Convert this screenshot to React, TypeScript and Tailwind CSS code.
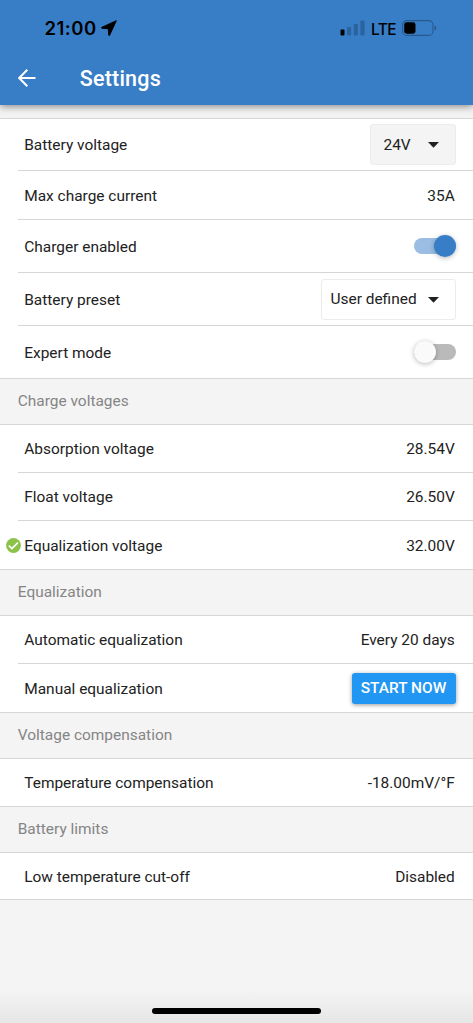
import { useState } from 'react';
import type { FC, ReactNode } from 'react';
import clsx from 'clsx';

interface RowProps {
  label: string;
  height: string;
  last?: boolean;
  checked?: boolean;
  children: ReactNode;
}

const Row: FC<RowProps> = ({ label, height, last, checked, children }) => (
  <div className={clsx('bg-white', !last && 'pl-[18px]', last && 'border-b border-[#d6d6d6]')}>
    <div
      className={clsx(
        'relative flex items-center justify-between pr-[17.5px]',
        height,
        last ? 'pl-[24.25px]' : 'border-b border-[#d6d6d6] pl-[6.25px]',
      )}
    >
      {checked ? (
        <svg className="absolute left-[5.5px] h-[15px] w-[15px]" viewBox="0 0 15 15" aria-hidden="true">
          <circle cx="7.5" cy="7.5" r="7.4" fill="#8bc34a" />
          <path d="M2.9 7.7l3 2.8 6-5.9" fill="none" stroke="#fff" strokeWidth="1.7" />
        </svg>
      ) : null}
      <span className="pt-[3px]">{label}</span>
      {children}
    </div>
  </div>
);

const Value: FC<{ children: ReactNode }> = ({ children }) => <span className="pt-[3px] pr-[0.75px]">{children}</span>;

const SectionTitle: FC<{ title: string; height: string }> = ({ title, height }) => (
  <h2 className={clsx('flex items-center border-b border-[#d6d6d6] pt-px pl-[17.75px] text-[#858585]', height)}>
    {title}
  </h2>
);

const Select: FC<{ value: string; className: string }> = ({ value, className }) => (
  <button
    type="button"
    className={clsx('flex h-[41px] items-center justify-between rounded-[3px] border border-[#ececec]', className)}
  >
    <span className="pt-0.5">{value}</span>
    <svg className="mt-px h-[6px] w-[11px]" viewBox="0 0 11 6" aria-hidden="true">
      <path d="M0 0h11L5.5 5.8z" fill="#212121" />
    </svg>
  </button>
);

const Toggle: FC<{ label: string; initial: boolean }> = ({ label, initial }) => {
  const [on, setOn] = useState(initial);

  return (
    <button
      type="button"
      role="switch"
      aria-checked={on}
      aria-label={label}
      onClick={() => setOn(!on)}
      className={clsx(
        'flex h-[15.5px] w-[42px] items-center rounded-full',
        on ? 'justify-end bg-[#9bbde4]' : 'justify-start bg-[#bababa]',
      )}
    >
      <span
        className={clsx(
          'h-[22px] w-[22px] shrink-0 rounded-full shadow-[0_1px_5px_rgba(0,0,0,0.28)]',
          on ? 'bg-[#387ec7]' : 'bg-[#fafafa]',
        )}
      />
    </button>
  );
};

const StatusBar: FC = () => (
  <div className="flex h-14 items-center justify-between pr-[36px] pl-[44.5px] text-black">
    <div className="flex items-center gap-1">
      <span className="pt-0.5 font-['Inter',sans-serif] text-[18.5px] font-semibold tracking-[0.5px]">21:00</span>
      <svg className="h-[16px] w-[16px]" viewBox="0 0 16 16" aria-hidden="true">
        <path d="M15.3.7L.7 7.4q-.6.5.1.8l6.5.5.4 6.5q.3.7.9.1z" stroke="#000" strokeLinejoin="round" />
      </svg>
    </div>
    <div className="flex items-center">
      <svg className="h-[16px] w-[25px]" viewBox="0 0 25 16" aria-hidden="true">
        <rect x="0.5" y="9.5" width="4" height="6" rx="1" />
        <rect x="7" y="7" width="4.2" height="8.5" rx="1" fill="#2c639f" />
        <rect x="13.7" y="4" width="4.2" height="11.5" rx="1" fill="#2c639f" />
        <rect x="20.4" y="0.5" width="4.2" height="15" rx="1" fill="#2c639f" />
      </svg>
      <span className="ml-[6px] w-[25px] pt-[3px] font-['Inter',sans-serif] text-[15.5px] font-medium tracking-[-0.6px]">
        LTE
      </span>
      <svg className="ml-[6px] h-[16px] w-[35px]" viewBox="0 0 35 16" aria-hidden="true">
        <rect x="0.6" y="0.6" width="30.4" height="14.8" rx="4.2" fill="none" stroke="#28598d" strokeWidth="1.1" />
        <rect x="2.2" y="2.3" width="11.3" height="11.4" rx="2.4" />
        <path d="M32.5 5.5q1.8.6 1.8 2.5t-1.8 2.5z" fill="#28598d" />
      </svg>
    </div>
  </div>
);

const App: FC = () => (
  <div className="flex h-[1023px] w-[473px] flex-col bg-[#f4f4f4] font-['Roboto',sans-serif] text-[15.45px] text-[#222]">
    <header className="z-10 h-[105px] bg-[#387ec7] shadow-[0_1px_8px_rgba(0,0,0,0.5)]">
      <StatusBar />
      <div className="flex h-11 items-center pl-[18px] text-white">
        <svg className="h-[18px] w-[18px]" viewBox="0 0 18 18" fill="none" stroke="#fff" strokeWidth="2" aria-hidden="true">
          <path d="M17.5 9H1.5M9.3.8L1.2 9l8.1 8.2" />
        </svg>
        <h1 className="ml-[43.75px] pt-0.5 text-[21.5px] font-medium tracking-[0.2px]">Settings</h1>
      </div>
    </header>

    <main className="mt-[13px] border-t border-[#d6d6d6]">
      <Row label="Battery voltage" height="h-[52px]">
        <Select value="24V" className="w-[86px] bg-[#f4f4f4] pr-4 pl-[13px]" />
      </Row>
      <Row label="Max charge current" height="h-[49px]">
        <Value>35A</Value>
      </Row>
      <Row label="Charger enabled" height="h-[53px]">
        <Toggle label="Charger enabled" initial />
      </Row>
      <Row label="Battery preset" height="h-[53px]">
        <Select value="User defined" className="w-[135px] bg-white pr-4 pl-[9px]" />
      </Row>
      <Row label="Expert mode" height="h-[52px]" last>
        <Toggle label="Expert mode" initial={false} />
      </Row>

      <SectionTitle title="Charge voltages" height="h-[46px]" />
      <Row label="Absorption voltage" height="h-[48px]">
        <Value>28.54V</Value>
      </Row>
      <Row label="Float voltage" height="h-[48px]">
        <Value>26.50V</Value>
      </Row>
      <Row label="Equalization voltage" height="h-[48px]" last checked>
        <Value>32.00V</Value>
      </Row>

      <SectionTitle title="Equalization" height="h-[46px]" />
      <Row label="Automatic equalization" height="h-[48px]">
        <Value>Every 20 days</Value>
      </Row>
      <Row label="Manual equalization" height="h-[48px]" last>
        <button
          type="button"
          className="h-[31px] w-[104px] rounded-[3px] bg-[#2196f3] pt-px font-medium whitespace-nowrap text-white shadow-[0_1px_4px_rgba(0,0,0,0.4)]"
        >
          START NOW
        </button>
      </Row>

      <SectionTitle title="Voltage compensation" height="h-[46px]" />
      <Row label="Temperature compensation" height="h-[47px]" last>
        <Value>-18.00mV/°F</Value>
      </Row>

      <SectionTitle title="Battery limits" height="h-[46px]" />
      <Row label="Low temperature cut-off" height="h-[46px]" last>
        <Value>Disabled</Value>
      </Row>
    </main>

    <div className="mt-auto flex h-[33px] justify-center bg-linear-to-b from-[#f4f4f4] to-[#e6e6e6] pt-[18px]">
      <div className="h-[6px] w-[169px] rounded-full bg-black" />
    </div>
  </div>
);

export default App;
